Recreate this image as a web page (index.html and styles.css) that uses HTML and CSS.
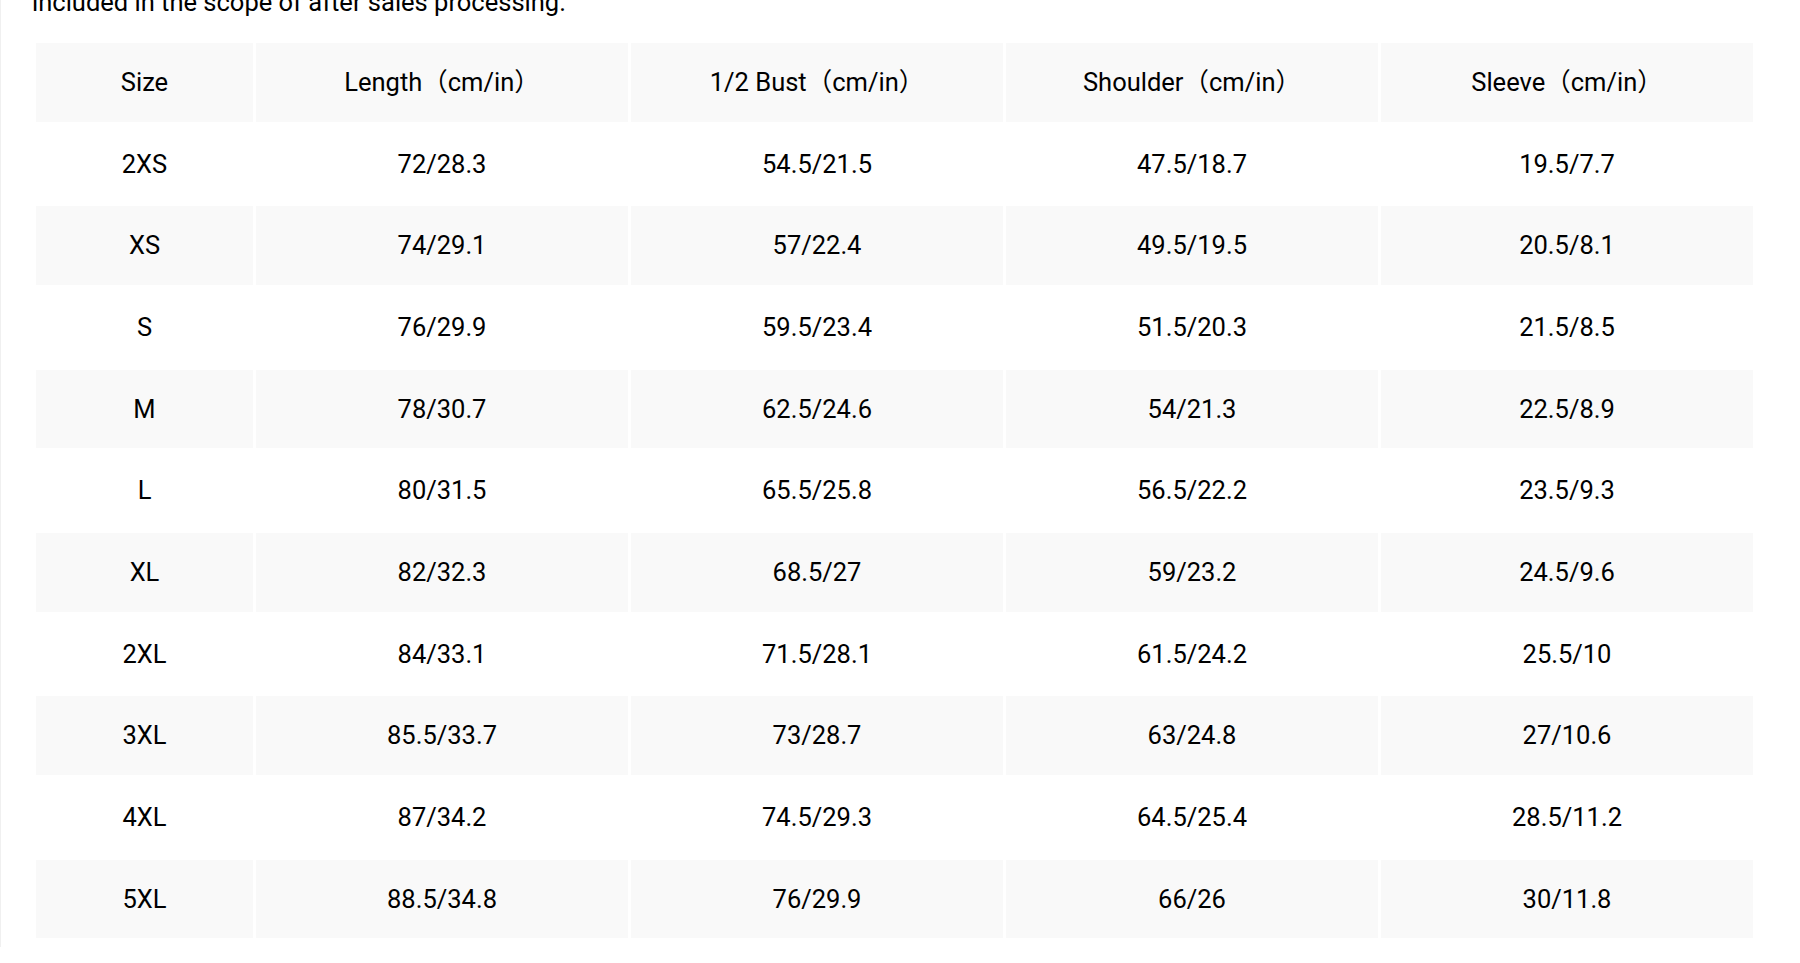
FILE: index.html
```html
<!DOCTYPE html>
<html lang="en">
<head>
<meta charset="utf-8">
<title>Size Chart</title>
<link rel="stylesheet" href="styles.css">
</head>
<body>
<div class="panel">
  <p class="note">included in the scope of after sales processing.</p>
  <table class="size-table">
    <colgroup>
      <col class="c-size">
      <col class="c-val">
      <col class="c-val">
      <col class="c-val">
      <col class="c-val">
    </colgroup>
    <tbody>
      <tr class="shade"><td>Size</td><td>Length（cm/in）</td><td>1/2 Bust（cm/in）</td><td>Shoulder（cm/in）</td><td>Sleeve（cm/in）</td></tr>
      <tr><td>2XS</td><td>72/28.3</td><td>54.5/21.5</td><td>47.5/18.7</td><td>19.5/7.7</td></tr>
      <tr class="shade"><td>XS</td><td>74/29.1</td><td>57/22.4</td><td>49.5/19.5</td><td>20.5/8.1</td></tr>
      <tr><td>S</td><td>76/29.9</td><td>59.5/23.4</td><td>51.5/20.3</td><td>21.5/8.5</td></tr>
      <tr class="shade"><td>M</td><td>78/30.7</td><td>62.5/24.6</td><td>54/21.3</td><td>22.5/8.9</td></tr>
      <tr><td>L</td><td>80/31.5</td><td>65.5/25.8</td><td>56.5/22.2</td><td>23.5/9.3</td></tr>
      <tr class="shade"><td>XL</td><td>82/32.3</td><td>68.5/27</td><td>59/23.2</td><td>24.5/9.6</td></tr>
      <tr><td>2XL</td><td>84/33.1</td><td>71.5/28.1</td><td>61.5/24.2</td><td>25.5/10</td></tr>
      <tr class="shade"><td>3XL</td><td>85.5/33.7</td><td>73/28.7</td><td>63/24.8</td><td>27/10.6</td></tr>
      <tr><td>4XL</td><td>87/34.2</td><td>74.5/29.3</td><td>64.5/25.4</td><td>28.5/11.2</td></tr>
      <tr class="shade"><td>5XL</td><td>88.5/34.8</td><td>76/29.9</td><td>66/26</td><td>30/11.8</td></tr>
    </tbody>
  </table>
</div>
</body>
</html>
```
FILE: styles.css
```css
html, body {
  margin: 0;
  padding: 0;
  background: #ffffff;
}

body {
  font-family: Roboto, "Noto Sans CJK SC", sans-serif;
  color: #000000;
  overflow: hidden;
}

.panel {
  border-left: 1px solid #f0f0f0;
  min-height: 963px;
  box-sizing: border-box;
}

.note {
  margin: -16px 0 0 31px;
  font-size: 25.5px;
  line-height: 36px;
  white-space: nowrap;
}

.size-table {
  margin: 20px 0 0 32px;
  border-collapse: separate;
  border-spacing: 3px;
  table-layout: fixed;
  width: 1723px;
  font-size: 25.5px;
}

.c-size {
  width: 217px;
}

.c-val {
  width: 372px;
}

.size-table td {
  height: 78.67px;
  padding: 0;
  text-align: center;
  vertical-align: middle;
  line-height: 1.2;
  background: #ffffff;
}

.size-table tr.shade td {
  background: #f9f9f9;
}
```
